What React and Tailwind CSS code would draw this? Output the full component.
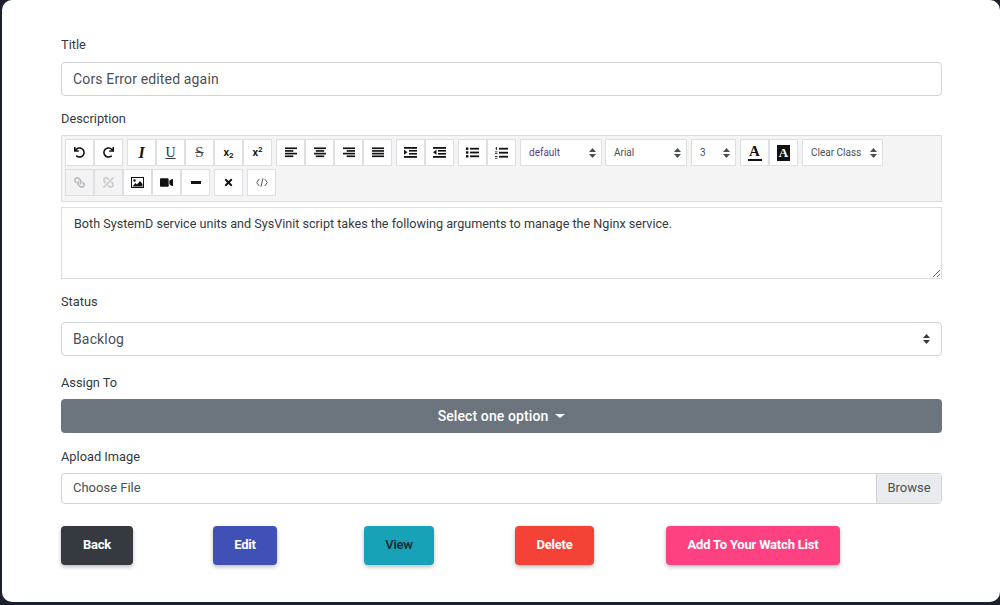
import React from "react";
import { FaUndo, FaRedo, FaLink, FaUnlink, FaVideo, FaTimes } from "react-icons/fa";

const Sort = ({ c = "#495057" }) => (
  <svg width="7" height="10" viewBox="0 0 7 10" className="shrink-0">
    <path d="M3.5 0 L7 4 H0 Z M3.5 10 L0 6 H7 Z" fill={c} />
  </svg>
);

const Bars = ({ rows }) => (
  <svg width="12" height="11" viewBox="0 0 13 11" fill="#111">
    {rows.map(([x, w], i) => (
      <rect key={i} x={x} y={i * 2.9} width={w} height="1.8" />
    ))}
  </svg>
);

const Indent = ({ flip }) => (
  <svg width="13" height="11" viewBox="0 0 13 11" fill="#111">
    <rect x="0" y="0" width="13" height="1.8" />
    <rect x="5" y="3" width="8" height="1.6" />
    <rect x="5" y="6" width="8" height="1.6" />
    <rect x="0" y="9" width="13" height="1.8" />
    <path d={flip ? "M0 5.3 L3.5 2.8 V7.8 Z" : "M3.5 5.3 L0 2.8 V7.8 Z"} />
  </svg>
);

const ListUl = () => (
  <svg width="13" height="11" viewBox="0 0 13 11" fill="#111">
    <rect x="0" y="0.5" width="2.4" height="2.4" />
    <rect x="0" y="4.3" width="2.4" height="2.4" />
    <rect x="0" y="8.1" width="2.4" height="2.4" />
    <rect x="4" y="0.8" width="9" height="1.8" />
    <rect x="4" y="4.6" width="9" height="1.8" />
    <rect x="4" y="8.4" width="9" height="1.8" />
  </svg>
);

const ListOl = () => (
  <svg width="13" height="12" viewBox="0 0 13 12" fill="#111">
    <rect x="0.8" y="0" width="1" height="3" />
    <rect x="0" y="4.5" width="2.5" height="0.8" />
    <rect x="0" y="6" width="2.5" height="0.8" />
    <rect x="0" y="9" width="2.5" height="0.8" />
    <rect x="0" y="10.8" width="2.5" height="0.8" />
    <rect x="4" y="0.8" width="9" height="1.8" />
    <rect x="4" y="4.8" width="9" height="1.8" />
    <rect x="4" y="8.8" width="9" height="1.8" />
  </svg>
);

const Picture = () => (
  <svg width="13" height="11" viewBox="0 0 13 11">
    <rect x="0.5" y="0.5" width="12" height="10" fill="#fff" stroke="#111" />
    <circle cx="3.5" cy="3.5" r="1.2" fill="#111" />
    <path d="M1.5 9.5 L4.5 6 L6 7.5 L9 4 L11.5 7 V9.5 Z" fill="#111" />
  </svg>
);

const CodeIcon = () => (
  <svg width="12" height="9" viewBox="0 0 12 9" fill="none" stroke="#444" strokeWidth="0.9">
    <path d="M3.2 1 L0.7 4.5 L3.2 8 M8.8 1 L11.3 4.5 L8.8 8 M7 0.3 L5 8.7" />
  </svg>
);

const B = ({ dim, children }) => (
  <div className={`w-[29px] h-[27px] flex items-center justify-center border border-[#dae0e5] text-[#111] ${dim ? "bg-[#f3f3f3]" : "bg-white"}`}>
    {children}
  </div>
);

const Group = ({ children }) => <div className="flex">{children}</div>;

const S = ({ w, color = "text-[#495057]", children }) => (
  <div className={`${w} h-[27px] bg-white border border-[#dae0e5] flex items-center justify-between pl-[8px] pr-[5px] text-[10px] ${color}`}>
    <span>{children}</span>
    <Sort />
  </div>
);

const Serif = ({ cls = "", children }) => <span className={cls} style={{ fontFamily: '"Liberation Serif", serif' }}>{children}</span>;

const Label = ({ children, cls = "" }) => <label className={`block text-[12.8px] leading-[18px] text-[#343a40] ${cls}`}>{children}</label>;

const Btn = ({ w, bg, text = "text-white", children, cls = "" }) => (
  <button className={`${w} h-[39px] pb-[2px] rounded-[4px] text-[13px] font-bold tracking-[-0.2px] flex items-center justify-center shadow-[0_2px_4px_rgba(0,0,0,0.26)] ${bg} ${text} ${cls}`}>{children}</button>
);

export default function App() {
  return (
    <div className="w-[1000px] h-[605px] bg-[#1a202c] overflow-hidden" style={{ fontFamily: "Roboto, sans-serif" }}>
      <div className="ml-[2px] h-[602px] bg-white rounded-[10px] pl-[59px] pr-[58px] pt-[36px]">
        <Label>Title</Label>
        <input
          readOnly
          value="Cors Error edited again"
          className="mt-[8px] block w-full h-[34px] pl-[11px] pr-3 rounded-[4px] border border-[#ced4da] text-[14px] tracking-[0.15px] text-[#495057] outline-none"
        />
        <Label cls="mt-[14px]">Description</Label>

        <div className="mt-[7px] h-[67px] border border-[#ddd] bg-[#f4f4f4] pl-[3px] pt-[3px]">
          <div className="flex gap-[4px] h-[27px]">
            <Group>
              <B><FaUndo size={11} /></B>
              <B><FaRedo size={11} /></B>
            </Group>
            <Group>
              <B><Serif cls="italic font-bold text-[16px] leading-none">I</Serif></B>
              <B><Serif cls="underline text-[14px] leading-none text-[#333]">U</Serif></B>
              <B><Serif cls="line-through text-[15px] leading-none text-[#444]">S</Serif></B>
              <B><span className="font-semibold text-[11px] leading-none">x<sub className="text-[8px]">2</sub></span></B>
              <B><span className="font-semibold text-[11px] leading-none">x<sup className="text-[8px]">2</sup></span></B>
            </Group>
            <Group>
              <B><Bars rows={[[0, 13], [0, 9], [0, 13], [0, 9]]} /></B>
              <B><Bars rows={[[0, 13], [2, 9], [0, 13], [2, 9]]} /></B>
              <B><Bars rows={[[0, 13], [4, 9], [0, 13], [4, 9]]} /></B>
              <B><Bars rows={[[0, 13], [0, 13], [0, 13], [0, 13]]} /></B>
            </Group>
            <Group>
              <B><Indent /></B>
              <B><Indent flip /></B>
            </Group>
            <Group>
              <B><ListUl /></B>
              <B><ListOl /></B>
            </Group>
            <div className="flex">
              <S w="w-[82px] mr-[3px]" color="text-[#5b3a8c]">default</S>
              <S w="w-[82px] mr-[4px]">Arial</S>
              <S w="w-[45px]">3</S>
            </div>
            <Group>
              <B>
                <span className="flex flex-col items-center">
                  <Serif cls="font-bold text-[15px] leading-[13px] text-[#111]">A</Serif>
                  <span className="block w-[14px] h-[2px] mt-[1px] bg-[#111]" />
                </span>
              </B>
              <B>
                <span className="w-[13px] h-[16px] bg-[#111] flex items-center justify-center">
                  <Serif cls="font-bold text-[13px] leading-none text-white">A</Serif>
                </span>
              </B>
            </Group>
            <S w="w-[81px]">Clear Class</S>
          </div>
          <div className="flex gap-[4px] h-[27px] mt-[3px]">
            <Group>
              <B dim><FaLink size={11} className="text-[#bbb] -scale-x-100" /></B>
              <B dim><FaUnlink size={11} className="text-[#ccc] -scale-x-100" /></B>
              <B><Picture /></B>
              <B><FaVideo size={13} /></B>
              <B><span className="block w-[10px] h-[3px] bg-[#111]" /></B>
            </Group>
            <B><FaTimes size={11} /></B>
            <B><CodeIcon /></B>
          </div>
        </div>

        <textarea
          readOnly
          className="mt-[5px] block w-full h-[72px] border border-[#ddd] pl-3 pr-3 pt-[7px] text-[12.6px] leading-[18px] text-[#343a40] outline-none"
          value="Both SystemD service units and SysVinit script takes the following arguments to manage the Nginx service."
        />

        <Label cls="mt-[14px]">Status</Label>
        <div className="mt-[11px] h-[34px] flex items-center justify-between pl-[11px] pr-[11px] rounded-[4px] border border-[#ced4da] text-[14px] tracking-[0.15px] text-[#495057]">
          <span>Backlog</span>
          <Sort c="#343a40" />
        </div>

        <Label cls="mt-[18px]">Assign To</Label>
        <button className="mt-[7px] w-full h-[34px] rounded-[4px] bg-[#6c757d] text-white text-[14px] font-medium tracking-[0.1px] flex items-center justify-center gap-[7px]">
          Select one option
          <span className="w-0 h-0 border-x-[5px] border-x-transparent border-t-[4px] border-t-white" />
        </button>

        <Label cls="mt-[15px]">Apload Image</Label>
        <div className="mt-[7px] h-[31px] flex rounded-[4px] border border-[#ced4da] text-[13px] text-[#495057] overflow-hidden">
          <div className="flex-1 flex items-center pl-[11px] pb-[2px]">Choose File</div>
          <div className="w-[65px] flex items-center justify-center bg-[#e9ecef] border-l border-[#ced4da] pb-[2px]">Browse</div>
        </div>

        <div className="mt-[22px] flex">
          <Btn w="w-[72px]" bg="bg-[#343a40]">Back</Btn>
          <Btn w="w-[64px]" bg="bg-[#3f51b5]" cls="ml-[80px]">Edit</Btn>
          <Btn w="w-[70px]" bg="bg-[#17a2b8]" text="text-[#0b2530] !font-medium" cls="ml-[87px]">View</Btn>
          <Btn w="w-[79px]" bg="bg-[#f44336]" cls="ml-[81px]">Delete</Btn>
          <Btn w="w-[174px]" bg="bg-[#ff4081]" cls="ml-[72px]">Add To Your Watch List</Btn>
        </div>
      </div>
    </div>
  );
}
